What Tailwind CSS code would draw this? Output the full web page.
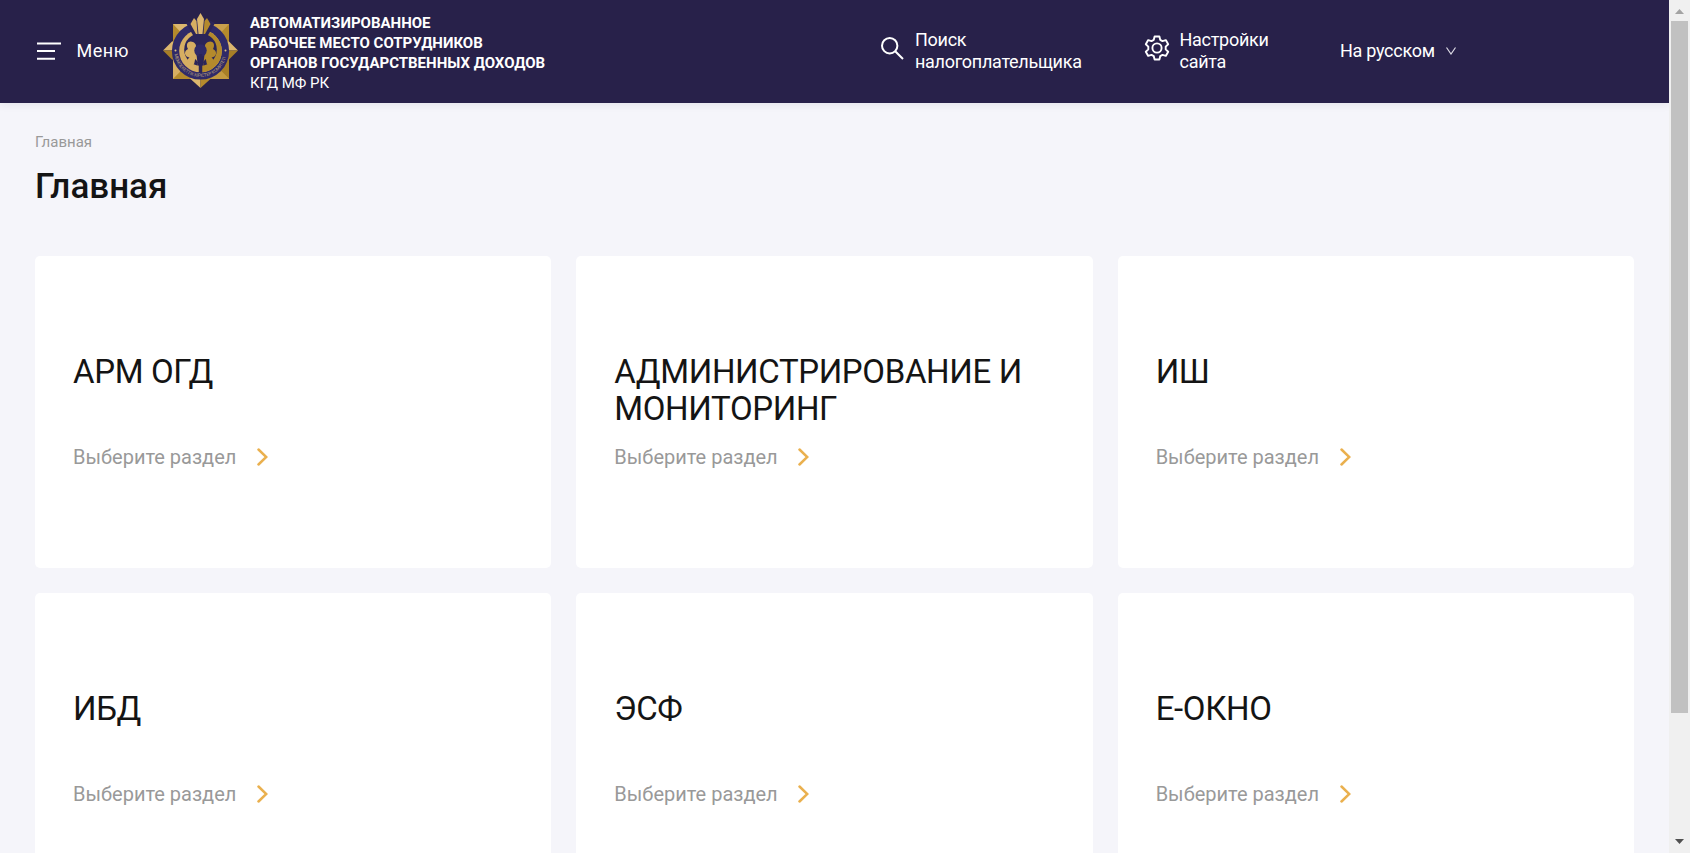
<!DOCTYPE html>
<html lang="ru">
<head>
<meta charset="utf-8">
<title>Главная</title>
<script src="https://cdn.jsdelivr.net/npm/@tailwindcss/browser@4"></script>
</head>
<body class="flex h-[853px] w-[1690px] overflow-hidden bg-[#f5f5fa] font-['Roboto',sans-serif] text-[#141414]">
<div class="flex h-full w-[1669px] shrink-0 flex-col overflow-hidden">
  <header class="flex h-[103px] shrink-0 items-start bg-[#28214a] text-white shadow-[0_2px_8px_rgba(40,33,74,0.08)]">
    <button class="ml-[37px] mt-[38px] flex w-[126px] shrink-0 items-center">
      <svg class="h-[26px] w-[24px] shrink-0" viewBox="0 0 24 26" fill="none" stroke="#fff" stroke-width="2"><path d="M0 5.400h24M0 13h18M0 20.700h18"/></svg>
      <span class="ml-[15.500px] text-[18px] leading-[26px] tracking-[0.5px]">Меню</span>
    </button>
    <svg class="mt-[13px] size-[75px] shrink-0" viewBox="0 0 75 75">
      <path d="M10 11H66V66H10Z" fill="#c9a04c"/>
      <path d="M10 11H27L10 29Z" fill="#dcb76e"/><path d="M10 11 22 24 10 29Z" fill="#b48a2c"/>
      <path d="M66 11H49L66 29Z" fill="#c9a04c"/><path d="M66 11 54 24 66 29Z" fill="#b48a2c"/>
      <path d="M10 66V46L22 54Z" fill="#d6ae62"/><path d="M10 66 22 54 30 66Z" fill="#b48a2c"/>
      <path d="M66 66V46L54 54Z" fill="#a87f27"/><path d="M66 66 54 54 46 66Z" fill="#c39a40"/>
      <path d="M0 37.500 9.500 28 14 37.500Z" fill="#dcb76e"/><path d="M0 37.500 9.500 47 14 37.500Z" fill="#a87f27"/>
      <path d="M75 37.500 65.500 28 61 37.500Z" fill="#dcb76e"/><path d="M75 37.500 65.500 47 61 37.500Z" fill="#a87f27"/>
      <path d="M27 65.500 37.500 75V60Z" fill="#dcb76e"/><path d="M48 65.500 37.500 75V60Z" fill="#b48a2c"/>
      <circle cx="37.500" cy="38" r="28.600" fill="#2f2a68"/>
      <circle cx="37.500" cy="38" r="21.300" fill="#d6ae62"/>
      <path d="M37.500 16.700a21.300 21.300 0 0 1 0 42.600Z" fill="#b48a2c"/>
      <circle cx="37.500" cy="36.500" r="16.300" fill="#2b2559"/>
      <path d="M23 10 31 24H44L52 10 44 6H31Z" fill="#2b2559"/>
      <path d="M35.500 59.500C35 53 35 48 32.500 46C31 48 32.500 52 28.500 52C24 51.500 23 47 26.500 44.500C21 44 20.500 38 25 36C22 30.500 26 27 30 29C34 31 33 34 33 37Z" fill="#d6ae62"/>
      <path d="M39.500 59.500C40 53 40 48 42.500 46C44 48 42.500 52 46.500 52C51 51.500 52 47 48.500 44.500C54 44 54.500 38 50 36C53 30.500 49 27 45 29C41 31 42 34 42 37Z" fill="#b48a2c"/>
      <circle cx="37.500" cy="37.500" r="6.200" fill="#2f2a68"/>
      <path d="M37.500 41V60" stroke="#2b2559" stroke-width="3.500"/>
      <path d="M37.500 0 41 6 39.500 21H35.500L34 6Z" fill="#dcb76e"/>
      <path d="M31 5 33.500 8 34.500 21H33L27.500 11Z" fill="#d6ae62"/><path d="M44 5 41.500 8 40.500 21H42L47.500 11Z" fill="#b48a2c"/>
      <circle cx="12.500" cy="37.500" r="1" fill="#e0c184"/><circle cx="62.500" cy="37.500" r="1" fill="#e0c184"/>
      <path id="ring" d="M11.500 41A26.200 26.200 0 0 0 63.500 41" fill="none"/>
      <text font-size="4.600" fill="#b9a07c"><textPath href="#ring" textLength="72">МЕМЛЕКЕТТІК КІРІСТЕР КОМИТЕТІ</textPath></text>
    </svg>
    <div class="ml-[12px] mt-[13px] w-[631px] shrink-0 text-[15px] leading-[20px]">
      <p class="font-bold">АВТОМАТИЗИРОВАННОЕ<br>РАБОЧЕЕ МЕСТО СОТРУДНИКОВ<br>ОРГАНОВ ГОСУДАРСТВЕННЫХ ДОХОДОВ</p>
      <p>КГД МФ РК</p>
    </div>
    <a class="mt-[29px] flex w-[263px] shrink-0">
      <svg class="mt-[8px] h-[23px] w-[23px] shrink-0" viewBox="0 0 23 23" fill="none" stroke="#fff" stroke-width="2"><circle cx="8.700" cy="8.700" r="7.700"/><path d="M14.200 14.200 22 22"/></svg>
      <span class="ml-[11px] text-[18px] leading-[22px] tracking-[-0.28px]">Поиск<br>налогоплательщика</span>
    </a>
    <a class="mt-[29px] flex w-[196px] shrink-0">
      <svg class="mt-[6px] size-[26px] shrink-0" viewBox="0 0 26 26" fill="none" stroke="#fff" stroke-width="1.900" stroke-linejoin="round"><path d="M10.600 1.500h4.800l.8 3.300 2.300 1.300 3.300-1 2.400 4.100-2.500 2.400v2.800l2.500 2.400-2.400 4.100-3.300-1-2.300 1.300-.8 3.300h-4.800l-.8-3.300-2.300-1.300-3.300 1-2.400-4.100 2.500-2.400v-2.800L1.800 9.200l2.400-4.100 3.300 1 2.300-1.300Z"/><circle cx="13" cy="13" r="4.600"/></svg>
      <span class="ml-[9.500px] text-[18px] leading-[22px] tracking-[-0.28px]">Настройки<br>сайта</span>
    </a>
    <button class="mt-[40px] flex shrink-0 items-center">
      <span class="text-[18px] leading-[22px] tracking-[-0.28px]">На русском</span>
      <svg class="ml-[11px] h-[8px] w-[10px]" viewBox="0 0 10 8" fill="none" stroke="#dcdae4" stroke-width="1.200"><path d="M.5.500 5 7 9.500.500"/></svg>
    </button>
  </header>
  <main class="px-[35px]">
    <nav class="mt-[29px] text-[15px] leading-[20px] text-[#999]">Главная</nav>
    <h1 class="mt-[15px] text-[35px] font-medium leading-[40px]">Главная</h1>
    <section class="mt-[49px] grid grid-cols-3 gap-[25px]">
      <a class="h-[312px] rounded-[5px] bg-white px-[38px] pt-[97px]">
        <h2 class="h-[90px] text-[33px] leading-[37px] tracking-[-0.36px]">АРМ ОГД</h2>
        <p class="flex items-center text-[20px] leading-[28px] text-[#999]">Выберите раздел<svg class="ml-[20.500px] h-[18px] w-[11px]" viewBox="0 0 11 18" fill="none" stroke="#eab04e" stroke-width="2.500" stroke-linecap="round"><path d="M1.500 1.500 9.300 9 1.500 16.500"/></svg></p>
      </a>
      <a class="h-[312px] rounded-[5px] bg-white px-[38px] pt-[97px]">
        <h2 class="h-[90px] text-[33px] leading-[37px] tracking-[-0.36px]">АДМИНИСТРИРОВАНИЕ И МОНИТОРИНГ</h2>
        <p class="flex items-center text-[20px] leading-[28px] text-[#999]">Выберите раздел<svg class="ml-[20.500px] h-[18px] w-[11px]" viewBox="0 0 11 18" fill="none" stroke="#eab04e" stroke-width="2.500" stroke-linecap="round"><path d="M1.500 1.500 9.300 9 1.500 16.500"/></svg></p>
      </a>
      <a class="h-[312px] rounded-[5px] bg-white px-[38px] pt-[97px]">
        <h2 class="h-[90px] text-[33px] leading-[37px] tracking-[-0.36px]">ИШ</h2>
        <p class="flex items-center text-[20px] leading-[28px] text-[#999]">Выберите раздел<svg class="ml-[20.500px] h-[18px] w-[11px]" viewBox="0 0 11 18" fill="none" stroke="#eab04e" stroke-width="2.500" stroke-linecap="round"><path d="M1.500 1.500 9.300 9 1.500 16.500"/></svg></p>
      </a>
      <a class="h-[312px] rounded-[5px] bg-white px-[38px] pt-[97px]">
        <h2 class="h-[90px] text-[33px] leading-[37px] tracking-[-0.36px]">ИБД</h2>
        <p class="flex items-center text-[20px] leading-[28px] text-[#999]">Выберите раздел<svg class="ml-[20.500px] h-[18px] w-[11px]" viewBox="0 0 11 18" fill="none" stroke="#eab04e" stroke-width="2.500" stroke-linecap="round"><path d="M1.500 1.500 9.300 9 1.500 16.500"/></svg></p>
      </a>
      <a class="h-[312px] rounded-[5px] bg-white px-[38px] pt-[97px]">
        <h2 class="h-[90px] text-[33px] leading-[37px] tracking-[-0.36px]">ЭСФ</h2>
        <p class="flex items-center text-[20px] leading-[28px] text-[#999]">Выберите раздел<svg class="ml-[20.500px] h-[18px] w-[11px]" viewBox="0 0 11 18" fill="none" stroke="#eab04e" stroke-width="2.500" stroke-linecap="round"><path d="M1.500 1.500 9.300 9 1.500 16.500"/></svg></p>
      </a>
      <a class="h-[312px] rounded-[5px] bg-white px-[38px] pt-[97px]">
        <h2 class="h-[90px] text-[33px] leading-[37px] tracking-[-0.36px]">Е-ОКНО</h2>
        <p class="flex items-center text-[20px] leading-[28px] text-[#999]">Выберите раздел<svg class="ml-[20.500px] h-[18px] w-[11px]" viewBox="0 0 11 18" fill="none" stroke="#eab04e" stroke-width="2.500" stroke-linecap="round"><path d="M1.500 1.500 9.300 9 1.500 16.500"/></svg></p>
      </a>
    </section>
  </main>
</div>
<div class="flex h-full w-[21px] shrink-0 flex-col bg-[#f0f0f0] pl-[2px]">
  <svg class="ml-[4px] mt-[9px] h-[5px] w-[9px]" viewBox="0 0 9 5"><path d="M0 5 4.500 0 9 5Z" fill="#a3a3a3"/></svg>
  <div class="mt-[7px] h-[692px] w-[17px] bg-[#c1c1c1]"></div>
  <svg class="ml-[4px] mt-[126px] h-[5px] w-[9px]" viewBox="0 0 9 5"><path d="M0 0H9L4.500 5Z" fill="#505050"/></svg>
</div>
</body>
</html>
